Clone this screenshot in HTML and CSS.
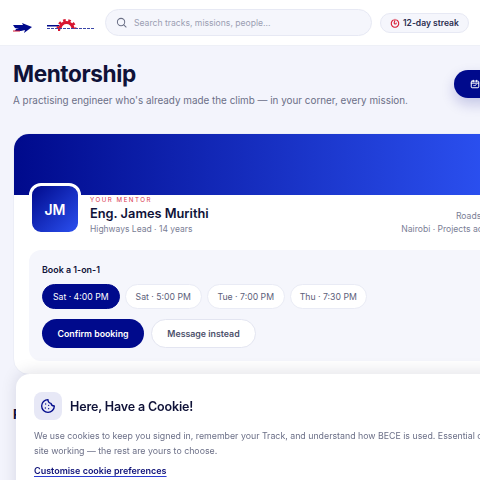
FILE: index.html
```html
<!DOCTYPE html>
<html lang="en">
<head>
    <meta charset="UTF-8">
    <meta name="viewport" content="width=device-width, initial-scale=1.0">
    <title>Mentorship</title>
    <link rel="stylesheet" href="styles.css">
</head>
<body>
    <div class="page">
        <header class="topbar">
            <svg class="logo" width="105" height="45" viewBox="0 0 105 45">
                <path d="M13 25h10l-1-2 10 4-8 6 1-3-4 1h-6l1-2h3l-4-1z" fill="#000a8c"/>
                <path d="M13 31h7" stroke="#d8152f" stroke-width="1"/>
                <path d="M47 25h12v1.500H47z" fill="#000a8c"/>
                <path d="M60 29a6.500 6.500 0 0 1 13 0" fill="none" stroke="#d8152f" stroke-width="3"/>
                <path d="M58 29a8.500 8.500 0 0 1 17 0" fill="none" stroke="#d8152f" stroke-width="3" stroke-dasharray="2.500 2.500"/>
                <path d="M58 27h3l-1 4h-2z" fill="#d8152f"/>
                <path d="M47 28.500h48" stroke="#3a46a8" stroke-width="1" stroke-dasharray="3 1"/>
            </svg>
            <div class="search">
                <svg width="11" height="11" viewBox="0 0 24 24" fill="none" stroke="#6b7086" stroke-width="2.200" stroke-linecap="round"><circle cx="11" cy="11" r="8"/><path d="M17 17l5 5"/></svg>
                <span>Search tracks, missions, people...</span>
            </div>
            <div class="streak">
                <svg width="10" height="10" viewBox="0 0 24 24" fill="none" stroke="#d8152f" stroke-width="2.600" stroke-linecap="round"><path d="M8 5a9 9 0 1 0 8 0"/><path d="M12 3v2c0 3-2 4-2 7a2.500 2.500 0 0 0 5 0"/></svg>
                <span>12-day streak</span>
            </div>
            <svg class="bell" width="12" height="14" viewBox="0 0 24 24" fill="none" stroke="#4a4e69" stroke-width="2"><path d="M6 17V10a6 6 0 0 1 12 0v7l2 2H4zM10 22h4"/></svg>
        </header>

        <main class="content">
            <div class="page-head">
                <div class="head-text">
                    <h1>Mentorship</h1>
                    <p>A practising engineer who's already made the climb — in your corner, every mission.</p>
                </div>
                <button class="head-btn">
                    <svg width="10" height="10" viewBox="0 0 24 24" fill="none" stroke="#fff" stroke-width="2.400" stroke-linecap="round"><rect x="3" y="5" width="18" height="16" rx="2"/><path d="M3 10h18M8 3v4M16 3v4M9 15l2 2 4-4"/></svg>
                    Schedule
                </button>
            </div>

            <section class="mentor-card">
                <div class="banner"></div>
                <div class="mentor-info">
                    <div class="avatar">JM</div>
                    <div class="mentor-text">
                        <div class="eyebrow">YOUR MENTOR</div>
                        <h2>Eng. James Murithi</h2>
                        <div class="role">Highways Lead · 14 years</div>
                    </div>
                    <div class="mentor-side">
                        <div>Roads Unit</div>
                        <div>Nairobi · Projects across</div>
                    </div>
                </div>
                <div class="booking">
                    <h3>Book a 1-on-1</h3>
                    <div class="slots">
                        <span class="slot slot-active">Sat · 4:00 PM</span>
                        <span class="slot">Sat · 5:00 PM</span>
                        <span class="slot">Tue · 7:00 PM</span>
                        <span class="slot">Thu · 7:30 PM</span>
                    </div>
                    <div class="actions">
                        <button class="btn-primary">Confirm booking</button>
                        <button class="btn-ghost">Message instead</button>
                    </div>
                </div>
            </section>

            <h2 class="next-title">Past sessions</h2>
        </main>
    </div>

    <!-- Cookie banner -->
    <aside class="cookie">
        <div class="cookie-head">
            <div class="cookie-icon">
                <svg width="16" height="16" viewBox="0 0 24 24" fill="none" stroke="#000a8c" stroke-width="2" stroke-linecap="round" stroke-linejoin="round"><path d="M12 2.500a9.500 9.500 0 1 0 9.500 9.500 5 5 0 0 1-5-4 5 5 0 0 1-4.500-5.500z"/><path d="M8.500 9v.01M8 15v.01M13 16v.01M13 11v.01"/></svg>
            </div>
            <h2>Here, Have a Cookie!</h2>
        </div>
        <p>We use cookies to keep you signed in, remember your Track, and understand how BECE is used. Essential cookies keep the<br>site working — the rest are yours to choose.</p>
        <a href="#">Customise cookie preferences</a>
    </aside>
</body>
</html>
```

FILE: styles.css
```css
html, body {
    margin: 0;
    padding: 0;
    height: 100%;
    overflow: hidden;
}

body {
    font-family: Inter, "Noto Sans", sans-serif;
    background-color: #f3f4fc;
    color: #0f1238;
}

.page {
    width: 560px;
}

/* Top bar */
.topbar {
    display: flex;
    align-items: center;
    height: 45px;
    background-color: #fff;
    border-bottom: 1px solid #eef0f7;
}

.logo {
    flex: none;
}

.search {
    width: 255px;
    height: 25px;
    flex: none;
    display: flex;
    align-items: center;
    gap: 7px;
    padding-left: 10px;
    background-color: #f5f6fc;
    border: 1px solid #e7e9f4;
    border-radius: 14px;
    font-size: 8.600px;
    color: #9b9eb3;
}

.streak {
    display: flex;
    align-items: center;
    gap: 3px;
    margin-left: 8px;
    height: 18px;
    padding: 0 9px;
    background-color: #f5f6fc;
    border: 1px solid #e7e9f4;
    border-radius: 10px;
    font-size: 8.500px;
    font-weight: 600;
    color: #2a2d4f;
    white-space: nowrap;
}

.bell {
    margin-left: 14px;
    flex: none;
}

/* Page heading */
.content {
    padding: 0 0 0 13px;
}

.page-head {
    display: flex;
    padding-top: 13px;
}

.head-text {
    width: 441px;
    flex: none;
}

h1 {
    margin: 0;
    font-size: 22.600px;
    line-height: 30px;
    font-weight: 700;
    letter-spacing: -0.4px;
}

.page-head p {
    margin: 3px 0 0;
    font-size: 9.900px;
    line-height: 16px;
    color: #6b6f87;
    white-space: nowrap;
}

.head-btn {
    display: flex;
    align-items: center;
    gap: 8px;
    height: 28px;
    margin: 11px 0 0;
    padding: 0 16px;
    background-color: #000a8c;
    color: #fff;
    border: none;
    border-radius: 14px;
    font-family: inherit;
    font-size: 9px;
    font-weight: 600;
    box-shadow: 0 6px 14px rgba(0, 10, 140, 0.2);
}

/* Mentor card */
.mentor-card {
    margin-top: 25px;
    width: 547px;
    height: 242px;
    background-color: #fff;
    border-radius: 16px;
    border: 1px solid #eceef7;
    box-sizing: border-box;
    overflow: hidden;
}

.banner {
    height: 61px;
    background: linear-gradient(90deg, #000a8c 0%, #2b50f0 87%);
}

.mentor-info {
    display: flex;
    height: 55px;
    padding: 0 59px 0 15px;
}

.avatar {
    width: 46px;
    height: 46px;
    margin-top: -12px;
    flex: none;
    display: flex;
    align-items: center;
    justify-content: center;
    border: 3px solid #fff;
    border-radius: 12px;
    background: linear-gradient(135deg, #000a8c, #2b50f0);
    color: #fff;
    font-size: 14px;
    font-weight: 600;
}

.mentor-text {
    margin-left: 9px;
}

.eyebrow {
    margin-top: 0;
    font-size: 6.200px;
    line-height: 9px;
    letter-spacing: 1.500px;
    color: #d8344a;
}

.mentor-text h2 {
    margin: 1px 0 0;
    font-size: 12.800px;
    line-height: 18px;
    font-weight: 600;
}

.role {
    margin-top: 0;
    font-size: 8.500px;
    line-height: 13px;
    color: #7a7e95;
}

.mentor-side {
    margin-left: auto;
    padding-top: 15px;
    text-align: right;
    font-size: 8.600px;
    line-height: 13px;
    color: #7a7e95;
}

/* Booking */
.booking {
    margin: 0 15px;
    height: 111px;
    padding: 13px 13px 0;
    background-color: #f5f6fc;
    border-radius: 12px;
    box-sizing: border-box;
}

h3 {
    margin: 0;
    font-size: 8.900px;
    line-height: 13px;
    font-weight: 600;
}

.slots {
    display: flex;
    gap: 5px;
    margin-top: 8px;
}

.slot {
    display: flex;
    align-items: center;
    justify-content: center;
    width: 75.500px;
    height: 23px;
    background-color: #fff;
    border: 1px solid #e9ebf5;
    border-radius: 13px;
    font-size: 8.700px;
    color: #5c607a;
    white-space: nowrap;
}

.slot-active {
    background-color: #000a8c;
    border-color: #000a8c;
    color: #fff;
}

.actions {
    display: flex;
    gap: 7px;
    margin-top: 10px;
}

.actions button {
    height: 29px;
    border-radius: 15px;
    font-family: inherit;
    font-size: 8.800px;
    font-weight: 600;
    padding: 0;
}

.btn-primary {
    width: 102px;
    background-color: #000a8c;
    border: none;
    color: #fff;
}

.btn-ghost {
    width: 105px;
    background-color: #fff;
    border: 1px solid #e3e5f1;
    color: #4d516b;
}

.next-title {
    margin: 31px 0 0;
    font-size: 13px;
}

/* Cookie banner */
.cookie {
    position: fixed;
    left: 16px;
    top: 374px;
    width: 640px;
    height: 140px;
    padding: 18px 18px;
    box-sizing: border-box;
    background-color: #fff;
    border-radius: 14px;
    box-shadow: 0 -2px 16px rgba(15, 18, 56, 0.12);
}

.cookie-head {
    display: flex;
    align-items: center;
    gap: 8px;
}

.cookie-icon {
    width: 28px;
    height: 28px;
    display: flex;
    align-items: center;
    justify-content: center;
    background-color: #e7e8f6;
    border-radius: 8px;
}

.cookie-head h2 {
    margin: 0;
    font-size: 12.500px;
    font-weight: 600;
    letter-spacing: -0.15px;
}

.cookie p {
    margin: 8px 0 0;
    font-size: 8.800px;
    line-height: 15px;
    color: #6b6f87;
    white-space: nowrap;
}

.cookie a {
    display: inline-block;
    margin-top: 6px;
    font-size: 9px;
    font-weight: 600;
    color: #0f1278;
    text-decoration-color: #2b3bd0;
    text-underline-offset: 2px;
}
```
